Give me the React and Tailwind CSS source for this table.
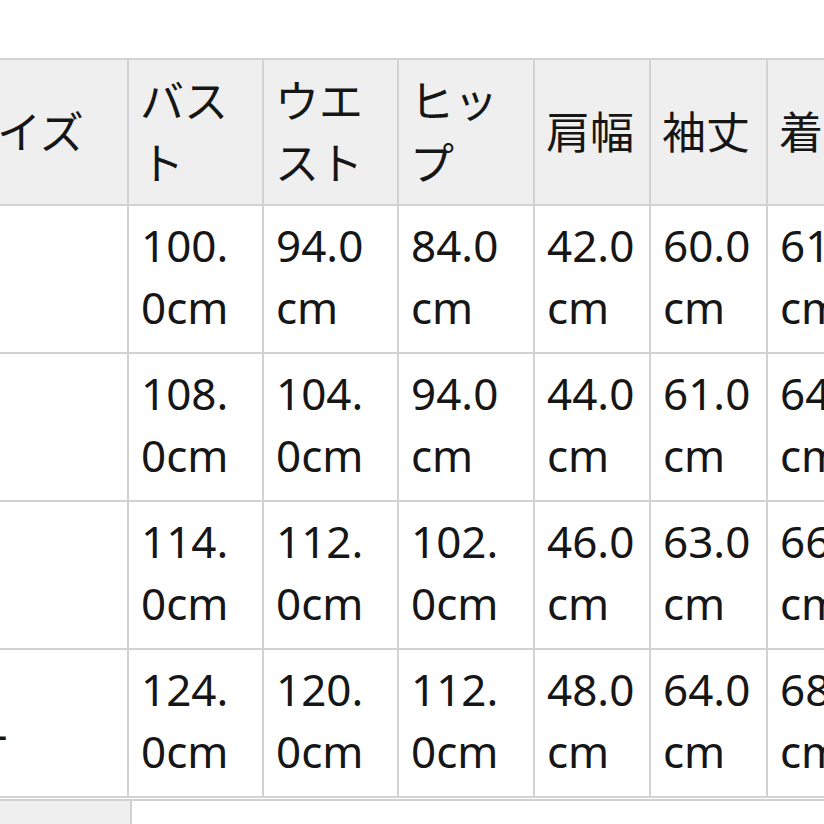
import React from 'react';

const headers = ['サイズ', 'バスト', 'ウエスト', 'ヒップ', '肩幅', '袖丈', '着丈'];

const rows = [
  ['S', ['100.', '0cm'], ['94.0', 'cm'], ['84.0', 'cm'], ['42.0', 'cm'], ['60.0', 'cm'], ['61.0', 'cm']],
  ['M', ['108.', '0cm'], ['104.', '0cm'], ['94.0', 'cm'], ['44.0', 'cm'], ['61.0', 'cm'], ['64.0', 'cm']],
  ['L', ['114.', '0cm'], ['112.', '0cm'], ['102.', '0cm'], ['46.0', 'cm'], ['63.0', 'cm'], ['66.0', 'cm']],
  ['XL', ['124.', '0cm'], ['120.', '0cm'], ['112.', '0cm'], ['48.0', 'cm'], ['64.0', 'cm'], ['68.0', 'cm']],
];

const font = { fontFamily: '"Noto Sans", "Noto Sans CJK JP", sans-serif' };

const Cols = () => (
  <colgroup>
    <col className="w-[184px]" />
    <col className="w-[135px]" />
    <col className="w-[135px]" />
    <col className="w-[136px]" />
    <col className="w-[116px]" />
    <col className="w-[117px]" />
    <col className="w-[117px]" />
  </colgroup>
);

export default function App() {
  return (
    <div
      className="w-[824px] h-[824px] overflow-hidden bg-white pt-[58px] text-[44px] leading-[62px] text-[#161616]"
      style={font}
    >
      <table className="table-fixed border-collapse -ml-[57px] w-[940px]">
        <Cols />
        <thead>
          <tr className="bg-[#efefef]">
            {headers.map((h, i) => (
              <th
                key={h}
                className={`border-2 border-[#d2d2d2] pr-[11px] py-[10px] text-left font-normal align-middle ${i === 0 ? 'pl-[8px]' : 'pl-[11px]'}`}
              >
                {h}
              </th>
            ))}
          </tr>
        </thead>
        <tbody>
          {rows.map((row) => (
            <tr key={row[0]}>
              <td className="border-2 border-[#d2d2d2] pl-[13px] pr-[11px] py-[11px] align-middle">{row[0]}</td>
              {row.slice(1).map((v, i) => (
                <td key={i} className="border-2 border-[#d2d2d2] pl-[12px] pr-[11px] pt-[8px] pb-[14px] align-middle whitespace-nowrap">
                  <span className="block">{v[0]}</span>
                  <span className="block">{v[1]}</span>
                </td>
              ))}
            </tr>
          ))}
        </tbody>
      </table>
      <table className="table-fixed border-collapse -ml-[57px] w-[940px] mt-[1px]">
        <colgroup>
          <col className="w-[187px]" />
          <col />
        </colgroup>
        <tbody>
          <tr>
            <th className="border-2 border-[#d2d2d2] bg-[#efefef] pl-[8px] pr-[11px] pt-[20px] pb-[11px] text-left font-normal">素材</th>
            <td className="border-2 border-[#d2d2d2] pr-[11px] pt-[20px] pb-[11px] pl-[66px]">ポリエステル100%</td>
          </tr>
        </tbody>
      </table>
    </div>
  );
}
